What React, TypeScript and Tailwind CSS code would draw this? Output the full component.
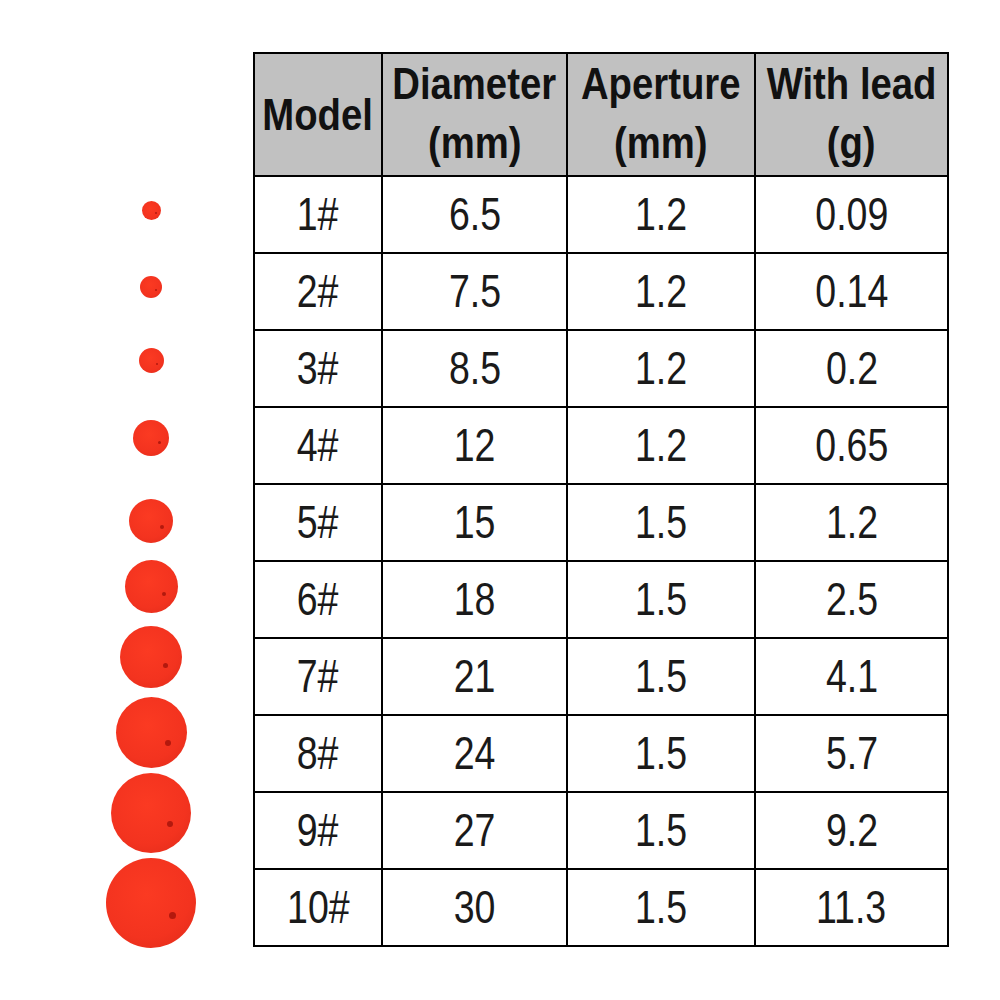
const rows = [
  { model: "1#", dia: "6.5", ap: "1.2", lead: "0.09" },
  { model: "2#", dia: "7.5", ap: "1.2", lead: "0.14" },
  { model: "3#", dia: "8.5", ap: "1.2", lead: "0.2" },
  { model: "4#", dia: "12", ap: "1.2", lead: "0.65" },
  { model: "5#", dia: "15", ap: "1.5", lead: "1.2" },
  { model: "6#", dia: "18", ap: "1.5", lead: "2.5" },
  { model: "7#", dia: "21", ap: "1.5", lead: "4.1" },
  { model: "8#", dia: "24", ap: "1.5", lead: "5.7" },
  { model: "9#", dia: "27", ap: "1.5", lead: "9.2" },
  { model: "10#", dia: "30", ap: "1.5", lead: "11.3" },
];

// ball size + nudge so each one sits where it does in the photo
const balls = [
  { cls: "w-[19px] h-[19px] -translate-y-[3px]", hole: "w-[2px] h-[2px]" },
  { cls: "w-[22px] h-[22px] -translate-y-[4px]", hole: "w-[2px] h-[2px]" },
  { cls: "w-[25px] h-[25px] -translate-y-[7px]", hole: "w-[2px] h-[2px]" },
  { cls: "w-[36px] h-[36px] -translate-y-[7px]", hole: "w-[3px] h-[3px]" },
  { cls: "w-[44px] h-[44px] -translate-y-[1px]", hole: "w-[4px] h-[4px]" },
  { cls: "w-[53px] h-[53px] -translate-y-[12px]", hole: "w-[4px] h-[4px]" },
  { cls: "w-[62px] h-[62px] -translate-y-[19px]", hole: "w-[5px] h-[5px]" },
  { cls: "w-[71px] h-[71px] -translate-y-[20px]", hole: "w-[6px] h-[6px]" },
  { cls: "w-[80px] h-[80px] -translate-y-[17px]", hole: "w-[6px] h-[6px]" },
  { cls: "w-[90px] h-[90px] -translate-y-[4px]", hole: "w-[7px] h-[7px]" },
];

function Ball({ cls, hole }: { cls: string; hole: string }) {
  return (
    <div
      className={`relative rounded-full bg-[radial-gradient(circle_at_45%_40%,#fb3a22_0%,#f3331f_60%,#de2a19_100%)] ${cls}`}
    >
      <span className={`absolute left-[70%] top-[60%] rounded-full bg-[#b3190e] ${hole}`} />
    </div>
  );
}

// the source image is squeezed horizontally, hence the scale-x
function Cell({ children }: { children: string }) {
  return (
    <div className="bg-white flex items-center justify-center text-[46px] text-[#1a1a1a]">
      <span className="inline-block scale-x-[0.815]">{children}</span>
    </div>
  );
}

function Head({ lines }: { lines: string[] }) {
  return (
    <div
      className={`bg-[#c1c1c1] flex flex-col items-center justify-center text-[44px] font-bold leading-[59px] text-[#111] ${
        lines.length > 1 ? "pb-[4px]" : ""
      }`}
    >
      {lines.map((l) => (
        <span key={l} className="inline-block whitespace-nowrap scale-x-[0.87]">
          {l}
        </span>
      ))}
    </div>
  );
}

export default function App() {
  return (
    <div className="w-[1000px] h-[1000px] bg-white font-[family-name:Liberation_Sans,Arial,sans-serif]">
      <div className="flex pt-[52px] pl-[101px] gap-[52px]">
        {/* Balls column */}
        <div className="w-[100px] flex flex-col">
          <div className="h-[123px]" />
          {balls.map((b, i) => (
            <div key={i} className="h-[77px] flex items-center justify-center">
              <Ball cls={b.cls} hole={b.hole} />
            </div>
          ))}
        </div>

        {/* Table */}
        <div className="grid grid-cols-[126px_183px_186px_191px] grid-rows-[121px_repeat(10,75px)] gap-[2px] p-[2px] bg-black">
          <Head lines={["Model"]} />
          <Head lines={["Diameter", "(mm)"]} />
          <Head lines={["Aperture", "(mm)"]} />
          <Head lines={["With lead", "(g)"]} />
          {rows.map((r) => [
            <Cell key={r.model + "m"}>{r.model}</Cell>,
            <Cell key={r.model + "d"}>{r.dia}</Cell>,
            <Cell key={r.model + "a"}>{r.ap}</Cell>,
            <Cell key={r.model + "l"}>{r.lead}</Cell>,
          ])}
        </div>
      </div>
    </div>
  );
}
